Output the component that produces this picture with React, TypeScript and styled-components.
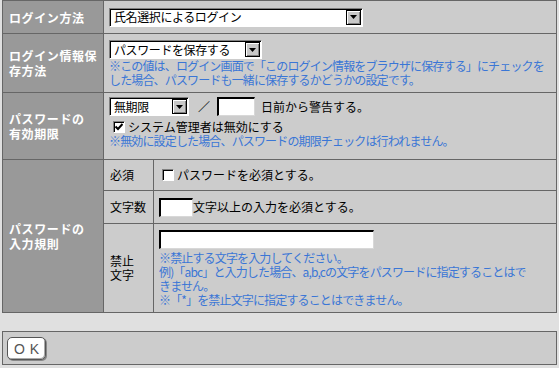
import React from 'react';
import styled, { createGlobalStyle } from 'styled-components';

const GlobalStyle = createGlobalStyle`
  html, body {
    margin: 0;
    padding: 0;
    background: #e0e0e0;
  }
  body {
    font-family: "Noto Sans CJK JP", "DejaVu Sans", sans-serif;
    font-size: 12px;
    color: #000;
  }
`;

const Page = styled.div`
  padding: 0 0 0 2px;
  width: 555px;
`;

const FormTable = styled.table`
  width: 555px;
  border-collapse: collapse;
  border: 1px solid #666;
  table-layout: fixed;
`;

const Col = styled.col<{ $w?: number }>`
  width: ${(p) => (p.$w ? `${p.$w}px` : 'auto')};
`;

const Row = styled.tr<{ $h: number }>`
  height: ${(p) => p.$h}px;
`;

const HeadCell = styled.th`
  background: #999;
  color: #fff;
  font-weight: bold;
  font-size: 12px;
  letter-spacing: 0.6px;
  line-height: 15px;
  text-align: left;
  vertical-align: middle;
  padding: 0 4px 0 6px;
  border: 1px solid #666;
`;

const SubHead = styled.td`
  background: #ccc;
  padding: 0 4px 0 6px;
  line-height: 14px;
  vertical-align: middle;
  border: 1px solid #666;
`;

const Cell = styled.td<{ $pt?: number }>`
  background: #ccc;
  padding: ${(p) => p.$pt ?? 0}px 5px 0 5px;
  vertical-align: ${(p) => (p.$pt !== undefined ? 'top' : 'middle')};
  border: 1px solid #666;
  line-height: 14px;
  overflow: hidden;
`;

const Line = styled.div<{ $mt?: number; $pl?: number }>`
  display: flex;
  align-items: center;
  white-space: nowrap;
  margin-top: ${(p) => p.$mt ?? 0}px;
  padding-left: ${(p) => p.$pl ?? 0}px;
`;

const Note = styled.div`
  color: #3a76d6;
  white-space: nowrap;
  letter-spacing: -0.85px;
  line-height: 14px;
`;

const SelectBox = styled.div<{ $w: number }>`
  display: inline-flex;
  align-items: center;
  justify-content: space-between;
  box-sizing: border-box;
  width: ${(p) => p.$w}px;
  height: 19px;
  background: #fff;
  border-top: 1px solid #808080;
  border-left: 1px solid #808080;
  border-right: 1px solid #fff;
  border-bottom: 1px solid #fff;
  box-shadow: inset 1px 1px 0 #000;
  padding: 1px 1px 1px 4px;
  letter-spacing: -0.4px;
`;

const ArrowButton = styled.span`
  display: flex;
  align-items: center;
  justify-content: center;
  box-sizing: border-box;
  width: 15px;
  height: 15px;
  background: #c8c8c8;
  border: 1px solid #000;
  box-shadow: inset 1px 1px 0 #fff, inset -1px -1px 0 #808080;
`;

const TextBox = styled.span<{ $w: number }>`
  display: inline-block;
  box-sizing: border-box;
  width: ${(p) => p.$w}px;
  height: 19px;
  background: #fff;
  border-top: 2px solid #000;
  border-left: 2px solid #000;
  border-right: 1px solid #d8d8d8;
  border-bottom: 1px solid #d8d8d8;
`;

const CheckBox = styled.span`
  display: inline-flex;
  align-items: center;
  justify-content: center;
  box-sizing: border-box;
  width: 12px;
  height: 12px;
  background: #fff;
  border-top: 1px solid #808080;
  border-left: 1px solid #808080;
  border-right: 1px solid #fff;
  border-bottom: 1px solid #fff;
  box-shadow: inset 1px 1px 0 #000;
  margin-right: 3px;
`;

const Slash = styled.span`
  margin: 0 7px 0 9px;
`;

const Label = styled.span<{ $ml?: number }>`
  margin-left: ${(p) => p.$ml ?? 0}px;
`;

const FootBar = styled.div`
  margin-top: 18px;
  box-sizing: border-box;
  width: 555px;
  height: 34px;
  background: #ccc;
  border: 1px solid #666;
  display: flex;
  align-items: center;
  padding-left: 4px;
`;

const OkButton = styled.button`
  box-sizing: border-box;
  width: 39px;
  height: 23px;
  background: #fff;
  border: 1px solid #555;
  border-radius: 5px;
  box-shadow: inset -1px -1px 0 #aaa, 1px 1px 0 #888;
  font-family: "Liberation Sans", "DejaVu Sans", sans-serif;
  font-size: 14px;
  font-weight: 300;
  letter-spacing: 5px;
  padding: 0 0 0 5px;
  color: #555;
  margin-top: 1px;
`;

const Arrow = () => (
  <ArrowButton>
    <svg width="7" height="4" viewBox="0 0 7 4">
      <polygon points="0,0 7,0 3.5,4" fill="#000" />
    </svg>
  </ArrowButton>
);

const Select = ({ w, value }: { w: number; value: string }) => (
  <SelectBox $w={w}>
    <span>{value}</span>
    <Arrow />
  </SelectBox>
);

const Check = ({ checked }: { checked?: boolean }) => (
  <CheckBox>
    {checked && (
      <svg width="8" height="8" viewBox="0 0 8 8">
        <polyline points="0.5,3.5 3,6 7.5,1" fill="none" stroke="#000" strokeWidth="2" />
      </svg>
    )}
  </CheckBox>
);

const App = (): JSX.Element => {
  return (
    <Page>
      <GlobalStyle />
      <FormTable>
        <colgroup>
          <Col $w={101} />
          <Col $w={50} />
          <Col />
        </colgroup>
        <tbody>
          <Row $h={33}>
            <HeadCell>ログイン方法</HeadCell>
            <Cell colSpan={2}>
              <Select w={254} value="氏名選択によるログイン" />
            </Cell>
          </Row>
          <Row $h={59}>
            <HeadCell>
              ログイン情報保
              <br />
              存方法
            </HeadCell>
            <Cell colSpan={2} $pt={6}>
              <Select w={153} value="パスワードを保存する" />
              <Note>
                ※この値は、ログイン画面で「このログイン情報をブラウザに保存する」にチェックを
              </Note>
              <Note>した場合、パスワードも一緒に保存するかどうかの設定です。</Note>
            </Cell>
          </Row>
          <Row $h={67}>
            <HeadCell>
              パスワードの
              <br />
              有効期限
            </HeadCell>
            <Cell colSpan={2} $pt={4}>
              <Line>
                <Select w={80} value="無期限" />
                <Slash>／</Slash>
                <TextBox $w={38} />
                <Label $ml={6}>日前から警告する。</Label>
              </Line>
              <Line $mt={4} $pl={4}>
                <Check checked />
                システム管理者は無効にする
              </Line>
              <Note>※無効に設定した場合、パスワードの期限チェックは行われません。</Note>
            </Cell>
          </Row>
          <Row $h={31}>
            <HeadCell rowSpan={3}>
              パスワードの
              <br />
              入力規則
            </HeadCell>
            <SubHead>必須</SubHead>
            <Cell>
              <Line $pl={3}>
                <Check />
                パスワードを必須とする。
              </Line>
            </Cell>
          </Row>
          <Row $h={33}>
            <SubHead>文字数</SubHead>
            <Cell>
              <Line>
                <TextBox $w={34} />
                文字以上の入力を必須とする。
              </Line>
            </Cell>
          </Row>
          <Row $h={89}>
            <SubHead>
              禁止
              <br />
              文字
            </SubHead>
            <Cell $pt={6}>
              <TextBox $w={215} />
              <Note>※禁止する文字を入力してください。</Note>
              <Note>例)「abc」と入力した場合、a,b,cの文字をパスワードに指定することはで</Note>
              <Note>きません。</Note>
              <Note>※「*」を禁止文字に指定することはできません。</Note>
            </Cell>
          </Row>
        </tbody>
      </FormTable>
      <FootBar>
        <OkButton>OK</OkButton>
      </FootBar>
    </Page>
  );
};

export default App;
